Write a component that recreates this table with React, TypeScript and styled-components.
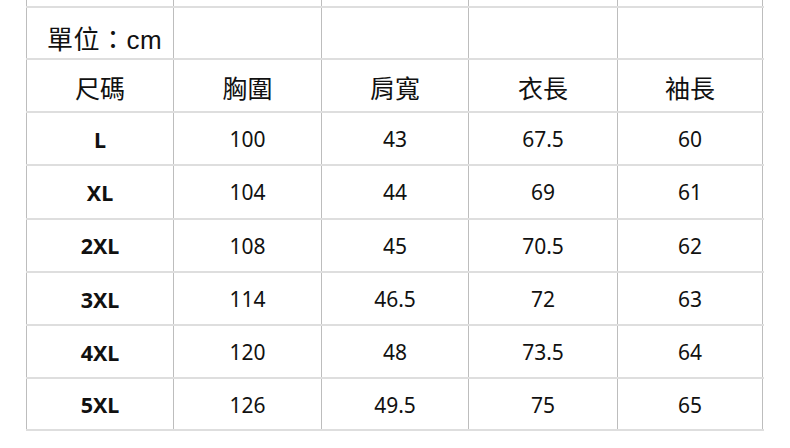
import React from 'react';
import styled, { createGlobalStyle } from 'styled-components';

const GlobalStyle = createGlobalStyle`
  html, body {
    margin: 0;
    padding: 0;
    background: #ffffff;
  }
  body {
    width: 790px;
    height: 448px;
    overflow: hidden;
    font-family: 'Noto Sans', 'Noto Sans CJK TC', sans-serif;
    color: #111111;
  }
`;

const columns = '147px 148px 147px 149px 146px';

const Page = styled.div`
  padding-left: 26px;
`;

const Table = styled.div`
  width: 738px;
  display: flex;
  flex-direction: column;
`;

const Row = styled.div<{ $height: number; $top?: boolean; $last?: boolean }>`
  display: grid;
  grid-template-columns: ${columns};
  height: ${(p) => p.$height}px;
  box-sizing: border-box;
  border-top: ${(p) => (p.$top ? '2px solid #dedede' : 'none')};
  border-bottom: ${(p) => (p.$last ? '2px solid #dedede' : 'none')};
`;

const Cell = styled.div<{ $align?: 'left' | 'center'; $shift?: number }>`
  display: flex;
  align-items: center;
  justify-content: ${(p) => (p.$align === 'left' ? 'flex-start' : 'center')};
  padding-left: ${(p) => (p.$align === 'left' ? '20px' : '0')};
  padding-top: ${(p) => p.$shift ?? 0}px;
  border-left: 1px solid #bdbdbd;
  box-sizing: border-box;
  &:last-child {
    border-right: 1px solid #bdbdbd;
  }
`;

const UnitText = styled.span`
  font-family: 'Liberation Sans', 'Noto Sans CJK TC', sans-serif;
  font-size: 26px;
  color: #111;
  letter-spacing: 0.5px;
`;

const HeadText = styled.span`
  font-family: 'Noto Sans CJK TC', sans-serif;
  font-size: 25px;
  color: #111;
`;

const SizeText = styled.span`
  font-family: 'Noto Sans', sans-serif;
  font-size: 21.5px;
  font-weight: 700;
  color: #111;
`;

const NumText = styled.span`
  font-family: 'Noto Sans', sans-serif;
  font-size: 21px;
  color: #111;
`;

const headers = ['尺碼', '胸圍', '肩寬', '衣長', '袖長'];

const rows: string[][] = [
  ['L', '100', '43', '67.5', '60'],
  ['XL', '104', '44', '69', '61'],
  ['2XL', '108', '45', '70.5', '62'],
  ['3XL', '114', '46.5', '72', '63'],
  ['4XL', '120', '48', '73.5', '64'],
  ['5XL', '126', '49.5', '75', '65'],
];

export default function App() {
  return (
    <>
      <GlobalStyle />
      <Page>
        <Table>
          <Row $height={6}>
            {headers.map((h) => (
              <Cell key={h} />
            ))}
          </Row>
          <Row $height={52} $top>
            <Cell $align="left" $shift={8}>
              <UnitText>單位：cm</UnitText>
            </Cell>
            <Cell />
            <Cell />
            <Cell />
            <Cell />
          </Row>
          <Row $height={53} $top>
            {headers.map((h) => (
              <Cell key={h} $shift={3}>
                <HeadText>{h}</HeadText>
              </Cell>
            ))}
          </Row>
          {rows.map((r, i) => (
            <Row key={r[0]} $height={53.3} $top $last={i === rows.length - 1}>
              {r.map((v, j) => (
                <Cell key={j} $shift={1}>
                  {j === 0 ? <SizeText>{v}</SizeText> : <NumText>{v}</NumText>}
                </Cell>
              ))}
            </Row>
          ))}
        </Table>
      </Page>
    </>
  );
}
